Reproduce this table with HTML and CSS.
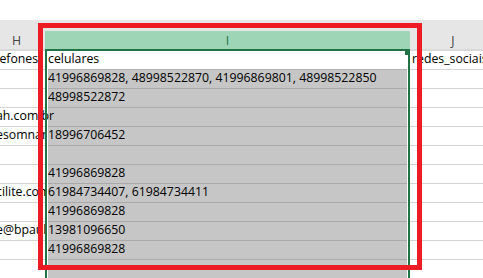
FILE: index.html
```html
<!DOCTYPE html>
<html lang="pt-BR">
<head>
  <meta charset="UTF-8">
  <title>Planilha</title>
  <link rel="stylesheet" href="styles.css">
</head>
<body>
<div class="sheet">
  <div class="topbar"></div>
  <div class="strip"></div>

  <div class="row head">
    <div class="c">H</div>
    <div class="c on">I</div>
    <div class="c">J</div>
  </div>

  <div class="row">
    <div class="c h cut">telefones</div>
    <div class="c i"><div class="v first">celulares</div></div>
    <div class="c j">redes_sociais</div>
  </div>
  <div class="row">
    <div class="c h"></div>
    <div class="c i"><div class="v">41996869828, 48998522870, 41996869801, 48998522850</div></div>
    <div class="c j"></div>
  </div>
  <div class="row">
    <div class="c h"></div>
    <div class="c i"><div class="v">48998522872</div></div>
    <div class="c j"></div>
  </div>
  <div class="row">
    <div class="c h spill"><span>ah.com.br</span></div>
    <div class="c i"><div class="v"></div></div>
    <div class="c j"></div>
  </div>
  <div class="row">
    <div class="c h">esomnambulo.com</div>
    <div class="c i"><div class="v">18996706452</div></div>
    <div class="c j"></div>
  </div>
  <div class="row">
    <div class="c h"></div>
    <div class="c i"><div class="v"></div></div>
    <div class="c j"></div>
  </div>
  <div class="row">
    <div class="c h"></div>
    <div class="c i"><div class="v">41996869828</div></div>
    <div class="c j"></div>
  </div>
  <div class="row">
    <div class="c h">cilite.com.br</div>
    <div class="c i"><div class="v">61984734407, 61984734411</div></div>
    <div class="c j"></div>
  </div>
  <div class="row">
    <div class="c h"></div>
    <div class="c i"><div class="v">41996869828</div></div>
    <div class="c j"></div>
  </div>
  <div class="row">
    <div class="c h">e@bpaula.com.br</div>
    <div class="c i"><div class="v">13981096650</div></div>
    <div class="c j"></div>
  </div>
  <div class="row">
    <div class="c h"></div>
    <div class="c i"><div class="v">41996869828</div></div>
    <div class="c j"></div>
  </div>
  <div class="row">
    <div class="c h"></div>
    <div class="c i"><div class="v"></div></div>
    <div class="c j"></div>
  </div>

  <!-- contorno da seleção da coluna I -->
  <div class="selection"></div>
  <!-- destaque vermelho -->
  <div class="mark"></div>
</div>
</body>
</html>
```

FILE: styles.css
```css
* {
  padding: 0;
  margin: 0;
  box-sizing: border-box;
}

body {
  background: #fff;
  font-family: "Open Sans", Lato, sans-serif;
  font-size: 12.3px;
  color: #000;
}

.sheet {
  position: relative;
  width: 483px;
  height: 278px;
  overflow: hidden;
}

.topbar {
  height: 20px;
  background: #fff;
}

.strip {
  height: 11px;
  background: #e6e6e6;
}

.row {
  display: grid;
  grid-template-columns: 59px 365px 86px;
  margin-left: -14px;
}

/* cabeçalho das colunas */
.head .c {
  height: 20px;
  padding-top: 1px;
  line-height: 17px;
  text-align: center;
  font-size: 12.3px;
  color: #444;
  background: #e6e6e6;
  border-bottom: 2px solid #d9d9d9;
}

.head .c:first-child {
  padding-left: 2px;
}

.head .on {
  background: #9fd5b7;
  color: #217346;
  border-bottom-color: #217346;
}

/* células */
.c {
  height: 19px;
  line-height: 16px;
  white-space: nowrap;
}

.h,
.j {
  border-bottom: 1px solid #d4d4d4;
  overflow: hidden;
}

.h {
  padding-left: 10px;
}

.h.cut {
  text-indent: -11px;
}

.h.spill {
  overflow: visible;
}

.h.spill span {
  position: relative;
  z-index: 1;
}

.j {
  padding-left: 2px;
}

.i {
  padding: 0 3px;
}

.v {
  height: 19px;
  background: #c6c6c6;
  border-bottom: 1px solid #a9a9a9;
  overflow: hidden;
}

.v.first {
  background: #fff;
  border-bottom-color: #b4b4b4;
}

.selection {
  position: absolute;
  left: 45px;
  top: 49px;
  width: 365px;
  bottom: -4px;
  border-left: 2px solid #217346;
  border-right: 2px solid #217346;
  z-index: 2;
}

.selection::after {
  content: "";
  position: absolute;
  right: -2px;
  top: 0;
  width: 5px;
  height: 6px;
  background: #217346;
}

.mark {
  position: absolute;
  left: 38px;
  top: 23px;
  width: 384px;
  height: 247px;
  border: 5px solid #ed1c24;
  z-index: 3;
}
```
